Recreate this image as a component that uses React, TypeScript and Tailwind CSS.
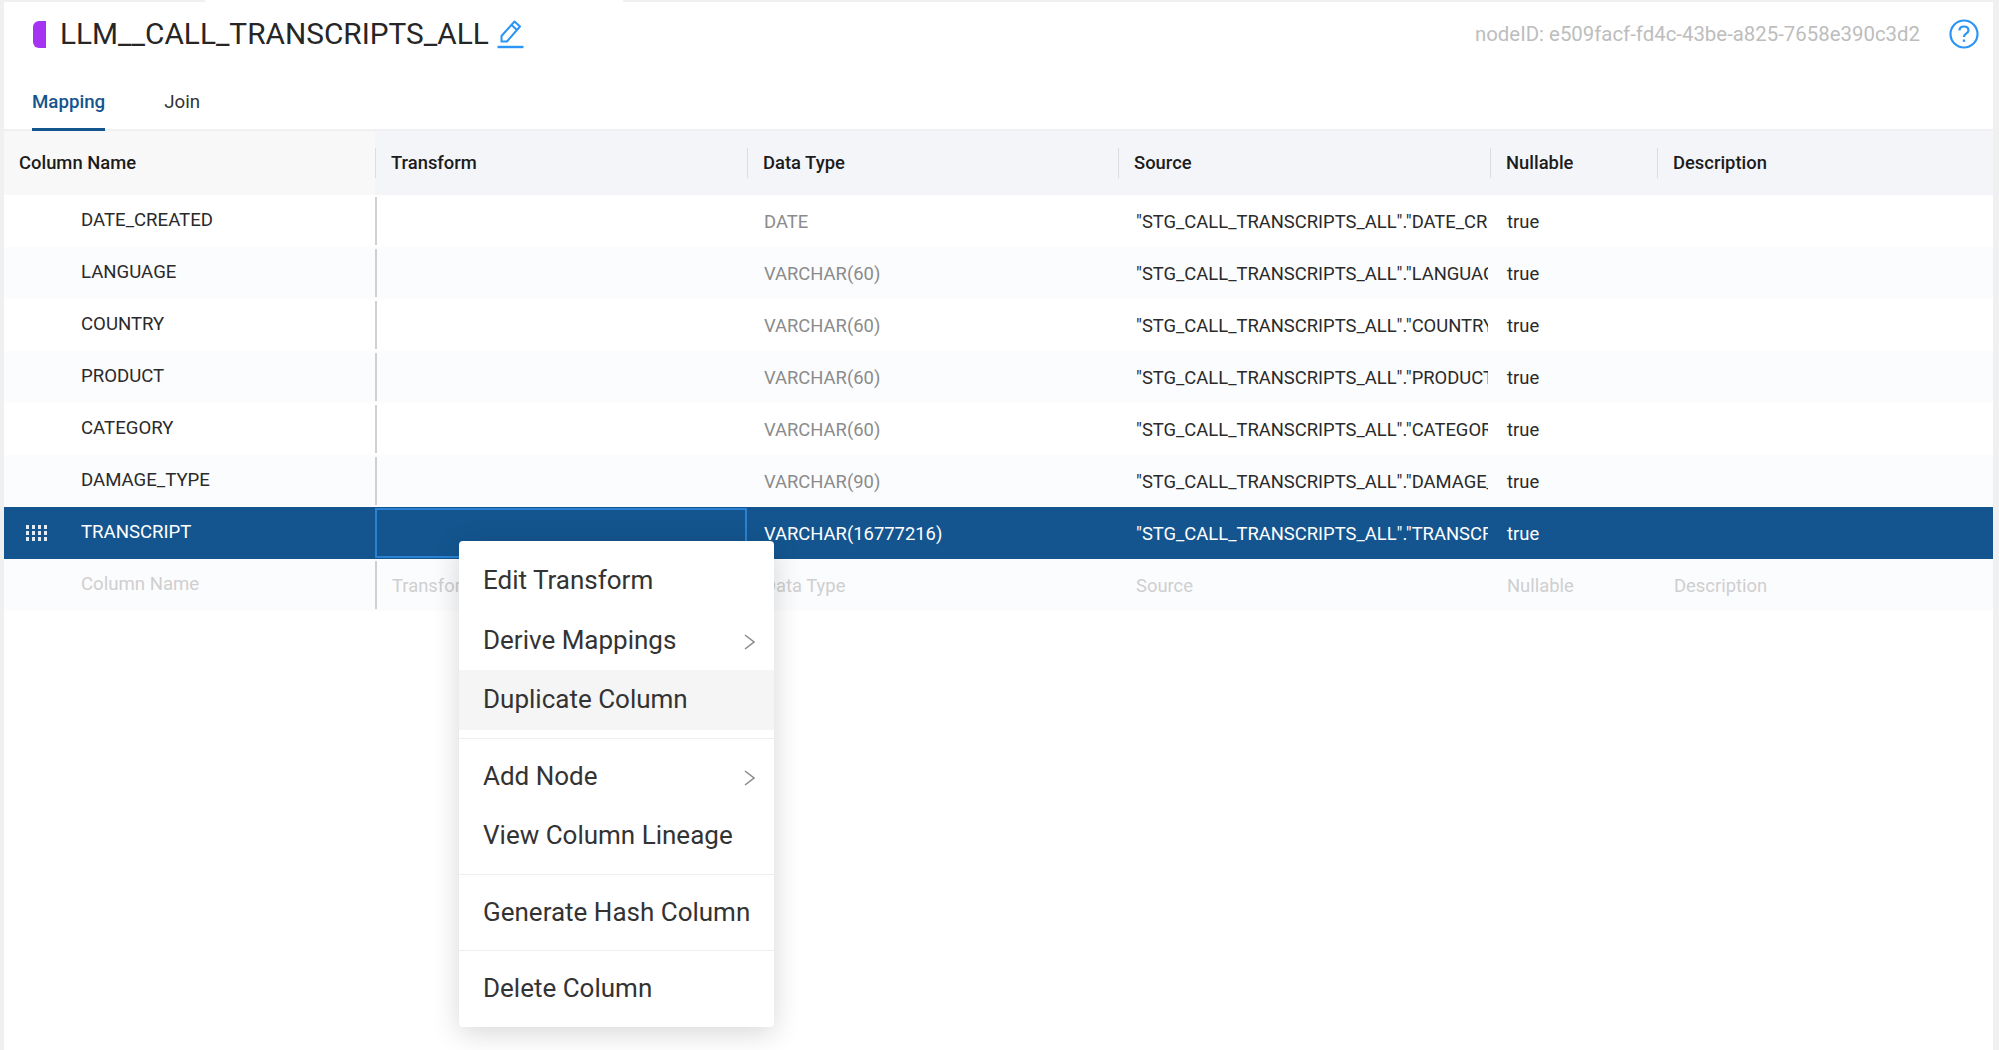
const rows = [
  { name: "DATE_CREATED", type: "DATE", source: '"STG_CALL_TRANSCRIPTS_ALL"."DATE_CREATED"' },
  { name: "LANGUAGE", type: "VARCHAR(60)", source: '"STG_CALL_TRANSCRIPTS_ALL"."LANGUAGE"' },
  { name: "COUNTRY", type: "VARCHAR(60)", source: '"STG_CALL_TRANSCRIPTS_ALL"."COUNTRY"' },
  { name: "PRODUCT", type: "VARCHAR(60)", source: '"STG_CALL_TRANSCRIPTS_ALL"."PRODUCT"' },
  { name: "CATEGORY", type: "VARCHAR(60)", source: '"STG_CALL_TRANSCRIPTS_ALL"."CATEGORY"' },
  { name: "DAMAGE_TYPE", type: "VARCHAR(90)", source: '"STG_CALL_TRANSCRIPTS_ALL"."DAMAGE_TYPE"' },
]

function HeaderCell({ label, className }: { label: string; className: string }) {
  return (
    <div className={`flex h-full items-center ${className}`}>
      <div className="h-[30px] border-r border-[#dcdde0]" />
      <span className="pl-[15px] text-[18.4px] font-medium text-[#1c1c1c]">{label}</span>
    </div>
  )
}

function Row({ name, type, source, even }: { name: string; type: string; source: string; even: boolean }) {
  return (
    <div className={`flex h-[52px] items-center text-[18.4px] ${even ? "bg-[#fbfcfe]" : "bg-white"}`}>
      <div className="w-[371px] shrink-0 pl-[77px] text-[18.6px] text-[#2a2a2a]">{name}</div>
      <div className="h-[48px] w-[372px] shrink-0 border-l-2 border-[#cfd0d2]" />
      <div className="w-[371px] shrink-0 pl-[17px] pt-[1px] text-[#8b8b8b]">{type}</div>
      <div className="w-[372px] shrink-0 overflow-hidden whitespace-nowrap pl-[18px] pr-[2px] pt-[1px] text-[#2a2a2a]">
        <div className="overflow-hidden">{source}</div>
      </div>
      <div className="pl-[17px] pt-[1px] text-[#2a2a2a]">true</div>
    </div>
  )
}

function Chevron() {
  return (
    <svg className="mt-[4px] h-[16px] w-[11px]" viewBox="0 0 11 16" fill="none" stroke="#8a8a8a" strokeWidth="1.5">
      <path d="M1 1L10 8L1 15" />
    </svg>
  )
}

function MenuItem({ label, arrow, active }: { label: string; arrow?: boolean; active?: boolean }) {
  return (
    <div className={`flex h-[59.5px] items-center justify-between pl-[24px] pr-[19px] ${active ? "bg-[#f5f5f5]" : ""}`}>
      <span>{label}</span>
      {arrow && <Chevron />}
    </div>
  )
}

function Divider() {
  return <div className="my-[8px] h-[1px] bg-[#eeeeee]" />
}

export default function App() {
  return (
    <div className="h-[1050px] w-[1999px] overflow-hidden bg-[#f0f0f0] font-['Roboto',sans-serif]">
      <div className="flex h-[2px]">
        <div className="w-[205px]" />
        <div className="w-[418px] bg-white" />
      </div>
      <div className="relative ml-[4px] h-[1048px] w-[1989px] bg-white">
        {/* title bar */}
        <div className="flex h-[64px] items-center pl-[29px] pr-[14px]">
          <div className="h-[27px] w-[13px] rounded-l-[6px] bg-[#a633f2]" />
          <h1 className="ml-[14px] text-[29.8px] font-normal text-[#262626]">LLM__CALL_TRANSCRIPTS_ALL</h1>
          <svg className="ml-[8px] h-[30px] w-[27px]" viewBox="0 0 27 30" fill="none" stroke="#2b95f5" strokeWidth="2">
            <path d="M4.5 22.5V17L17.5 2.5L23 7.5L10 22.5H4.5Z" strokeLinejoin="round" />
            <path d="M14.5 6L20 11" />
            <path d="M0.5 28H26.5" strokeWidth="2.4" />
          </svg>
          <span className="ml-auto text-[20.4px] text-[#bdbdbd]">nodeID: e509facf-fd4c-43be-a825-7658e390c3d2</span>
          <svg className="ml-[29px] h-[30px] w-[30px]" viewBox="0 0 30 30" fill="none" stroke="#2b95f5">
            <circle cx="15" cy="15" r="13.5" strokeWidth="2.2" />
            <path d="M10.5 11.5C10.5 9 12.5 7.5 15 7.5C17.5 7.5 19.5 9 19.5 11.5C19.5 14.5 15 14.5 15 18" strokeWidth="2.2" />
            <path d="M15 20.5V22.8" strokeWidth="2.4" />
          </svg>
        </div>

        {/* tabs */}
        <div className="flex h-[65px] items-start gap-[59px] border-b-2 border-[#f0f0f2] pl-[28px] text-[18.7px]">
          <div className="flex h-[65px] flex-col items-center justify-between">
            <span className="pt-[22px] font-medium text-[#14558f]">Mapping</span>
            <div className="h-[3px] w-full bg-[#14558f]" />
          </div>
          <div className="pt-[22px] text-[#333333]">Join</div>
        </div>

        {/* table header */}
        <div className="flex h-[64px] items-center bg-[#f4f5f9]">
          <div className="flex h-full w-[371px] items-center bg-[#f8f8f8] pl-[15px] text-[18.4px] font-medium text-[#1c1c1c]">
            Column Name
          </div>
          <HeaderCell label="Transform" className="w-[372px]" />
          <HeaderCell label="Data Type" className="w-[371px]" />
          <HeaderCell label="Source" className="w-[372px]" />
          <HeaderCell label="Nullable" className="w-[167px]" />
          <HeaderCell label="Description" className="w-[300px]" />
        </div>

        {rows.map((r, i) => (
          <Row key={r.name} name={r.name} type={r.type} source={r.source} even={i % 2 === 1} />
        ))}

        {/* selected row */}
        <div className="flex h-[52px] items-center bg-[#14558f] text-[18.4px] text-white">
          <div className="flex w-[371px] shrink-0 items-center">
            <div className="ml-[22px] grid w-[21px] grid-cols-4 gap-x-[3px] gap-y-[2px]">
              {Array.from({ length: 12 }).map((_, i) => (
                <span key={i} className="h-[4px] w-[3px] bg-[#e4edf5]" />
              ))}
            </div>
            <span className="ml-[34px] text-[18.6px]">TRANSCRIPT</span>
          </div>
          <div className="h-[50px] w-[372px] shrink-0 border-2 border-[#2b82d0]" />
          <div className="w-[371px] shrink-0 pl-[17px] pt-[1px]">VARCHAR(16777216)</div>
          <div className="w-[372px] shrink-0 overflow-hidden whitespace-nowrap pl-[18px] pr-[2px] pt-[1px]">
            <div className="overflow-hidden">"STG_CALL_TRANSCRIPTS_ALL"."TRANSCRIPT"</div>
          </div>
          <div className="pl-[17px] pt-[1px]">true</div>
        </div>

        {/* empty row */}
        <div className="flex h-[52px] items-center bg-[#fbfcfe] text-[18.4px] text-[#cfcfcf]">
          <div className="w-[371px] shrink-0 pl-[77px] text-[18.6px]">Column Name</div>
          <div className="flex h-[48px] w-[372px] shrink-0 items-center border-l-2 border-[#cfd0d2] pl-[15px] pt-[2px]">Transform</div>
          <div className="w-[371px] shrink-0 pl-[17px] pt-[1px]">Data Type</div>
          <div className="w-[372px] shrink-0 pl-[18px] pt-[1px]">Source</div>
          <div className="w-[167px] shrink-0 pl-[17px] pt-[1px]">Nullable</div>
          <div className="pl-[17px] pt-[1px]">Description</div>
        </div>

        {/* context menu */}
        <div className="absolute left-[455px] top-[539px] w-[315px] rounded-[4px] bg-white pb-[8px] pt-[10px] text-[26px] text-[#333333] shadow-[0_6px_28px_rgba(0,0,0,0.16)]">
          <MenuItem label="Edit Transform" />
          <MenuItem label="Derive Mappings" arrow />
          <MenuItem label="Duplicate Column" active />
          <Divider />
          <MenuItem label="Add Node" arrow />
          <MenuItem label="View Column Lineage" />
          <Divider />
          <MenuItem label="Generate Hash Column" />
          <Divider />
          <MenuItem label="Delete Column" />
        </div>
      </div>
    </div>
  )
}
